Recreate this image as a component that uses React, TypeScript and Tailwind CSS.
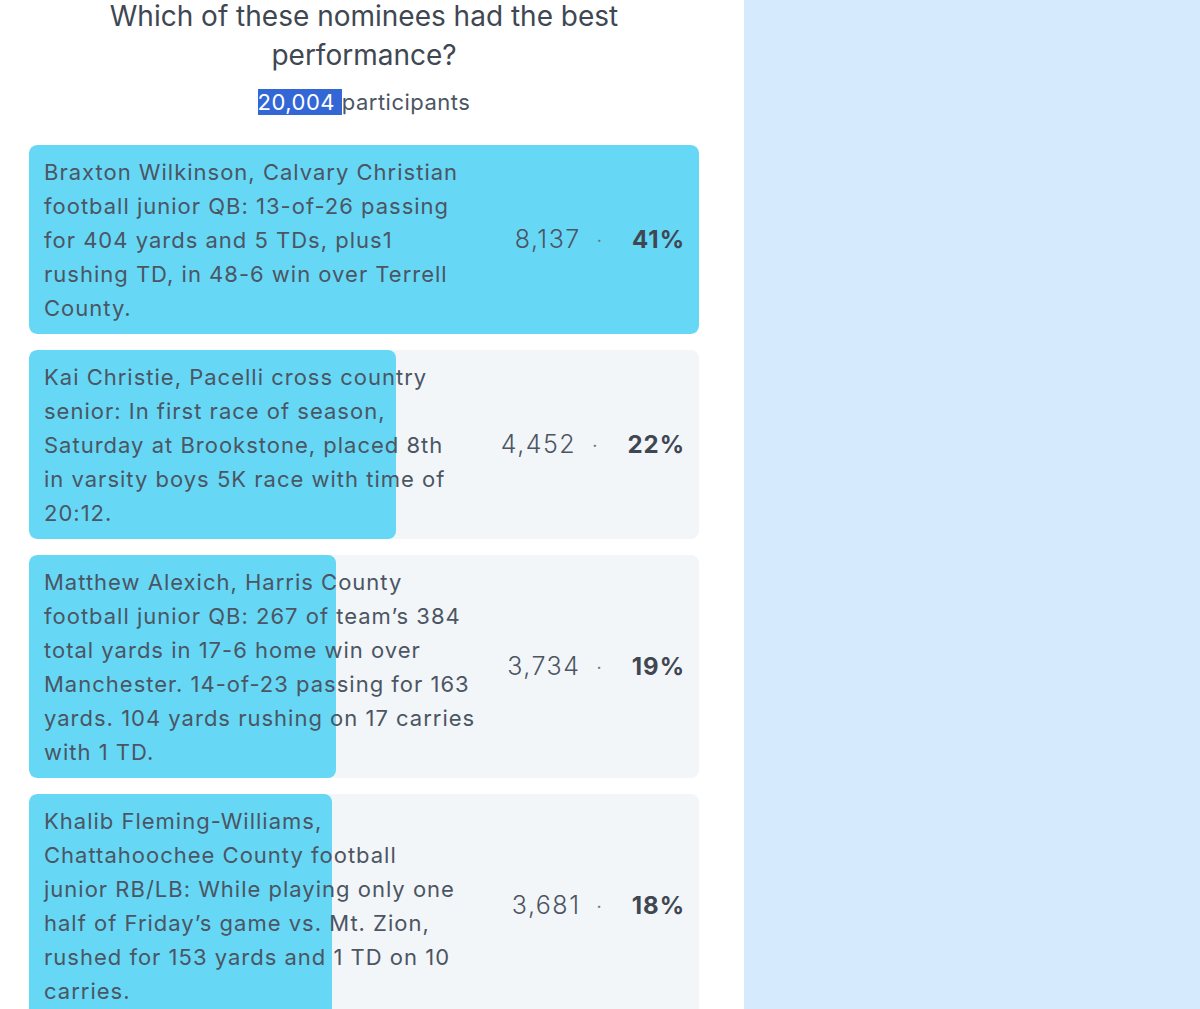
const options = [
  {
    lines: [
      'Braxton Wilkinson, Calvary Christian',
      'football junior QB: 13-of-26 passing',
      'for 404 yards and 5 TDs, plus1',
      'rushing TD, in 48-6 win over Terrell',
      'County.',
    ],
    votes: 8137,
    pct: 41,
  },
  {
    lines: [
      'Kai Christie, Pacelli cross country',
      'senior: In first race of season,',
      'Saturday at Brookstone, placed 8th',
      'in varsity boys 5K race with time of',
      '20:12.',
    ],
    votes: 4452,
    pct: 22,
  },
  {
    lines: [
      'Matthew Alexich, Harris County',
      'football junior QB: 267 of team\u2019s 384',
      'total yards in 17-6 home win over',
      'Manchester. 14-of-23 passing for 163',
      'yards. 104 yards rushing on 17 carries',
      'with 1 TD.',
    ],
    votes: 3734,
    pct: 19,
  },
  {
    lines: [
      'Khalib Fleming-Williams,',
      'Chattahoochee County football',
      'junior RB/LB: While playing only one',
      'half of Friday\u2019s game vs. Mt. Zion,',
      'rushed for 153 yards and 1 TD on 10',
      'carries.',
    ],
    votes: 3681,
    pct: 18,
  },
];

function OptionRow({ lines, votes, pct, max }: { lines: string[]; votes: number; pct: number; max: number }) {
  return (
    <div className="relative rounded-lg bg-[#f3f6f8] overflow-hidden">
      {/* fill scaled to the leading option */}
      <div className="absolute inset-y-0 left-0 rounded-lg bg-[#66d8f5]" style={{ width: `${(votes / max) * 100}%` }} />
      <div className="relative flex items-center justify-between pl-[15px] pr-[14px] pt-[10px] pb-[9px]">
        <p className="whitespace-nowrap text-[22px] leading-[34px] tracking-[1px] text-[#4b5563]">
          {lines.map((l, i) => (
            <span key={i} className="block">{l}</span>
          ))}
        </p>
        <div className="flex items-center text-[24px] text-[#4b5563]">
          <span className="text-[25px] font-light tracking-[1.5px]">{votes.toLocaleString('en-US')}</span>
          <span className="ml-[16px] mr-[30px] text-[18px] text-[#6b7280]">·</span>
          <span className="text-right font-bold tracking-[1px] text-[#3f4752]">{pct}%</span>
        </div>
      </div>
    </div>
  );
}

export default function App() {
  const max = Math.max(...options.map(o => o.votes));
  return (
    <div className="flex h-[1009px] overflow-hidden bg-white font-['Inter',sans-serif]">
      <div className="w-[744px] shrink-0">
        <div className="w-[728px] px-[29px] -mt-[3px]">
          <h1 className="text-center text-[28px] leading-[39px] text-[#3f4752]">
            Which of these nominees had the best
            <br />
            performance?
          </h1>
          <p className="mt-[12px] text-center text-[22px] leading-[30px] tracking-[0.5px] text-[#4b5563]">
            <span className="bg-[#3367d6] text-white">20,004 </span>participants
          </p>
          <div className="mt-[28px] flex flex-col gap-4">
            {options.map(o => (
              <OptionRow key={o.votes} {...o} max={max} />
            ))}
          </div>
        </div>
      </div>
      <div className="flex-1 bg-[#d6eafe]" />
    </div>
  );
}
